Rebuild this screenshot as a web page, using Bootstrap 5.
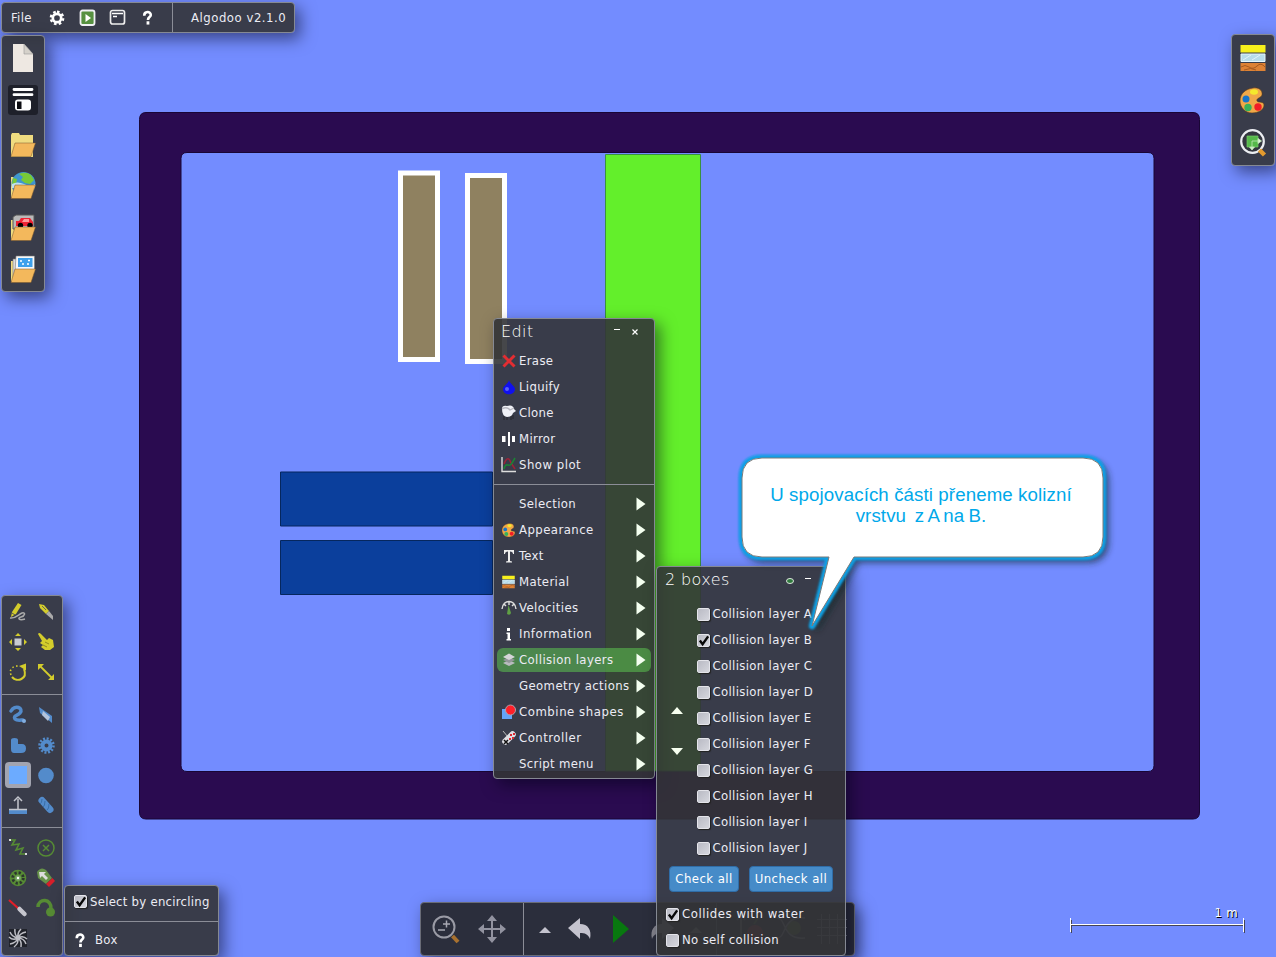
<!DOCTYPE html>
<html lang="en">
<head>
<meta charset="utf-8">
<meta name="viewport" content="width=device-width, initial-scale=1">
<title>Algodoo v2.1.0</title>
<link href="https://cdn.jsdelivr.net/npm/bootstrap@5.3.0/dist/css/bootstrap.min.css" rel="stylesheet">
<style>
body{background:#738cff;font:13px/16px "DejaVu Sans Condensed","DejaVu Sans",sans-serif;font-stretch:condensed;letter-spacing:.34px;color:#ececf4}
svg{display:block;flex:none;overflow:visible}
.desk{width:1276px;height:957px}
.win{position:absolute;background:rgba(51,52,55,.905);border:1px solid #858993;border-radius:4px;box-shadow:5px 6px 16px rgba(0,0,20,.5)}
.win-menu{left:1px;top:2px;width:294px;height:31px}
.win-files{left:1px;top:35px;width:44px;height:257px}
.win-props{left:1231px;top:34px;width:44px;height:132px}
.win-tools{left:1px;top:595px;width:62px;height:361px}
.win-opt{left:64px;top:885px;width:155px;height:71px}
.win-play{left:420px;top:902px;width:435px;height:54px;background:rgba(35,36,39,.9);border-color:#696c77}
.win-edit{left:493px;top:318px;width:162px;height:461px}
.win-boxes{left:656px;top:566px;width:190px;height:390px}
.rule{height:1px;background:#8b8d97;flex:none}
.vrule{width:1px;background:#8b8d97}
.title{font-family:"DejaVu Sans Light","DejaVu Sans Condensed","DejaVu Sans",sans-serif;font-weight:200;font-size:16px;letter-spacing:.4px;height:29px;line-height:25px;color:#fff}
.item{height:26px;padding:0 4px 0 7px;gap:2px}
.item .ico{width:16px;height:16px}
.item.on{margin:1px 3px;padding:0 1px 0 4px;height:24px;background:rgba(90,190,80,.58);border-radius:6px}
.opt{height:26px;gap:3px}
.check{width:13px;height:13px;background:linear-gradient(135deg,#b9bac4,#d5d6dd);border:1px solid #e4e4ea;border-radius:2px;box-shadow:1px 1px 1px #222}
.act{height:26px;background:#468bc8;border:1px solid #2f6da8;border-radius:4px;color:#fff;font-size:13px;line-height:22px;padding:0;letter-spacing:.45px}
.tools{display:grid;grid-template-columns:28px 28px;grid-auto-rows:30px;justify-items:center;align-items:center;padding-left:2px}
.picked{width:26px;height:26px;background:#6cabff;border:4px solid #a2a4b0;border-radius:4px}
.callout{left:730px;top:446px}
.callout-text{left:742px;top:484px;width:358px;color:#00a8ea;font:18.7px/21px "Liberation Sans",Arial,sans-serif;letter-spacing:.1px;white-space:pre-line}
.callout-text span{word-spacing:-1px}
.scale{left:1070px;top:906px;width:174px}
.scale-label{padding-right:6px;line-height:14px;text-shadow:1px 1px #000;color:#fff}
</style>
</head>
<body class="m-0 overflow-hidden">
<svg width="0" height="0" class="position-absolute">
<defs>
<symbol id="palette" viewBox="0 0 26 26"><path d="M13 1C18 0 23 3 22 8c-1 3-6 3-5 6 1 2 7 0 7 4 0 5-6 8-12 8C5 26 0 20 0 14 0 6 6 2 13 1Z" fill="#f0a848" stroke="#5c3a18" stroke-width=".6"/><ellipse cx="14" cy="5" rx="4" ry="2.700" fill="#f5e92c"/><circle cx="6" cy="12" r="3.500" fill="#1674c9"/><circle cx="8" cy="20.500" r="3.700" fill="#37b25a"/><circle cx="18" cy="20" r="3.700" fill="#f21d26"/></symbol>
<symbol id="material" viewBox="0 0 26 26"><path fill="#f7f01c" d="M.5 0h25v7.500H.5z"/><path fill="#b7dcea" stroke="#e6f6fb" d="M1 9h24v7.500H1z"/><path d="M3 15l8-5M12 15l8-5" stroke="#e2f3f9"/><path fill="#dd8235" d="M.5 18h25v8H.5z"/><path d="M1 22q4-3 8 0t8-1 8 1M4 25q7-3 12 0" fill="none" stroke="#a65a20"/></symbol>
<symbol id="help" viewBox="0 0 16 16"><path d="M4.500 5.500c0-5 7-5 7-.8C11.500 7 8.500 7 8.500 10" fill="none" stroke="#fff" stroke-width="2.800"/><path fill="#fff" d="M7 11.500h3V15H7z"/></symbol>
<symbol id="arrow" viewBox="0 0 10 14"><path d="M.5.500l9 6.500-9 6.500z" fill="#f4fff0"/></symbol>
<symbol id="front" viewBox="0 0 26 26"><path d="M5 12h20.500l-4.500 13.500H1z" fill="#f3b85c" stroke="#79572d" stroke-width=".5"/></symbol>
<symbol id="gear" viewBox="0 0 18 18"><path fill="none" stroke="currentColor" stroke-width="2.600" stroke-dasharray="2.900 2.600" d="M9 2a7 7 0 1 1 0 14a7 7 0 1 1 0-14"/><circle cx="9" cy="9" r="4.700" fill="none" stroke="currentColor" stroke-width="3"/></symbol>
<symbol id="tick" viewBox="0 0 13 13"><path d="M2 6l3 4L11 1.500" fill="none" stroke="#080808" stroke-width="2.600"/></symbol>
</defs>
</svg>

<main class="desk position-relative overflow-hidden">
<!-- simulated scene -->
<svg width="1276" height="957">
<path fill-rule="evenodd" d="M146 112.500H1193q6.500 0 6.500 7V812q0 7-6.500 7H146q-6.500 0-6.500-7V119.500q0-7 6.500-7ZM187 152.500q-6 0-6 6V765.500q0 6 6 6H1148q6 0 6-6V158.500q0-6-6-6Z" fill="#2a0b50" stroke="#190635"/>
<path fill="#63ef2b" stroke="#3a9140" d="M605.500 154.500h95V771h-95z"/>
<g fill="#8f8160" stroke="#fff" stroke-width="5"><path d="M400.500 173h37v186.500h-37zM467.500 175.500h37V361.500h-37z"/></g>
<path fill="#0b3f9c" stroke="#06275e" d="M280.500 472h212v54h-212zM280.500 540.500h212v54h-212z"/>
</svg>

<nav class="win win-menu d-flex align-items-center">
<span style="width:38px;margin-left:9px">File</span>
<svg width="16" height="16" color="#fff"><use href="#gear"/></svg>
<svg style="margin-left:15px" width="15" height="16"><rect x=".5" y=".5" width="14" height="14.500" rx="2" fill="#579141" stroke="#f0f0f5" stroke-width="1.800"/><path d="M5.500 4l5.500 4-5.500 4z" fill="#fff"/></svg>
<svg style="margin-left:15px" width="15" height="15"><rect x=".5" y=".5" width="14" height="13.500" rx="2" fill="none" stroke="#eee" stroke-width="1.700"/><path d="M2 3.500h11M3 6.500h4" stroke="#fff" stroke-width="1.500"/></svg>
<svg style="margin-left:15px" width="15" height="16"><use href="#help"/></svg>
<i class="vrule align-self-stretch" style="margin-left:17px"></i>
<span style="margin-left:18px;letter-spacing:.52px">Algodoo v2.1.0</span>
</nav>

<aside class="win win-files">
<div class="d-flex flex-column align-items-center" style="padding-top:1px">
<div class="d-flex align-items-center justify-content-center" style="height:42px"><svg width="20" height="28"><path d="M0 0h11l9 10v18H0z" fill="#eee8e2"/><path d="M11 0v10h9z" fill="#d5d1ca" stroke="#999" stroke-width=".6"/></svg></div>
<div class="d-flex align-items-center justify-content-center" style="height:42px"><svg width="30" height="30"><rect width="30" height="30" rx="3" fill="#1e202a"/><path d="M6 4.500h18M6 9.700h18" stroke="#fff" stroke-width="2.800" stroke-linecap="round"/><rect x="7" y="14.500" width="16" height="11" rx="3" fill="#fff"/><path d="M9 16.500h4.500v7.500H9z" fill="#0c0d12"/></svg></div>
<div class="d-flex align-items-center justify-content-center" style="height:46px"><svg width="26" height="26"><path d="M1 26V4l1-2h7l1 2h13v22z" fill="#f0dc80"/><use href="#front" width="26" height="26"/></svg></div>
<div class="d-flex align-items-center justify-content-center" style="height:38px"><svg width="26" height="28"><path d="M1 5h12v20H1z" fill="#f0dc80"/><circle cx="13.500" cy="12" r="12" fill="#3f95cf"/><path d="M9 2q7-3 12 1l3 5-4 4-5-1-4-3 2-3zM3 6l4 1-1 5-4 1z" fill="#78ca37"/><path d="M2 12q5-3 12 0t11 0v4H2z" fill="#bfe1ef"/><use href="#front" y="1" height="26" width="26"/></svg></div>
<div class="d-flex align-items-center justify-content-center" style="height:46px"><svg width="26" height="27"><path d="M1 5h8v20H1z" fill="#f0dc80"/><path d="M3 2l3-2h18v14H3z" fill="#b9b9b9" stroke="#555"/><path d="M6 9V6h3l2-3h9l3 4v4H6z" fill="#ee2334"/><path d="M14 4h5v3h-7z" fill="#f99"/><circle cx="10.500" cy="10.500" r="2.700"/><circle cx="20" cy="10.500" r="2.700"/><use href="#front" y="0" height="26" width="26"/></svg></div>
<div class="d-flex align-items-center justify-content-center" style="height:38px"><svg width="26" height="28"><path d="M1 5h7v20H1z" fill="#f0dc80"/><path d="M3 3h18v18H3z" fill="#ddd" stroke="#777" stroke-width=".6"/><path d="M6 0h18.500v16H5z" fill="#f8f8f8" stroke="#777" stroke-width=".6"/><path d="M8 2h14.500v9H8z" fill="#3da0ec"/><path d="M10 5h2M18 4.500h2M12 8h2M17 8h2" stroke="#fff" stroke-width="1.700" fill="none"/><use href="#front" y="1" height="26" width="26"/></svg></div>
</div>
</aside>

<aside class="win win-props d-flex flex-column align-items-center" style="gap:16px;padding-top:10px">
<svg width="26" height="26"><use href="#material"/></svg>
<svg width="26" height="26"><use href="#palette"/></svg>
<svg width="26" height="27"><circle cx="12.500" cy="12.500" r="11.300" fill="#33363f" stroke="#eceef2" stroke-width="2.200"/><path d="M7 7h11v11H7z" fill="#55b94a" stroke="#77cb6a" stroke-width=".7"/><path d="M12 12h7M12 12v8M18 9.500l3.500 2.500-3.500 2.500zM9.500 18h5L12 21z" fill="#e4f7df" stroke="#bfe7b6" stroke-width=".8"/><path d="M19.500 21l5 5" stroke="#e39a2e" stroke-width="4.500"/></svg>
</aside>

<aside class="win win-tools d-flex flex-column">
<div class="tools" style="padding-top:1px;height:98px">
<svg width="18" height="18"><path d="M3 9L9 0l3.500 2L7 11l-5 3z" fill="#d3cc2c"/><path d="M1 15c5 1 8-3 12-5 4-1 3 3-1 4s-2 4 4 2" fill="none" stroke="#aaa" stroke-width="1.500"/><path d="M3 10l3 2" stroke="#555"/></svg>
<svg width="18" height="18"><path d="M2 1l5 1 5 6-3 3-6-6z" fill="#d3cc2c"/><path d="M9 11l3-3 4 5v4z" fill="#aaa"/><path d="M5 3l4 4" stroke="#665"/></svg>
<svg width="18" height="18"><path d="M5.500 5.500h7v7h-7z" fill="#c8cad2"/><path d="M6 3l3-3 3 3zM6 15l3 3 3-3zM3 6L0 9l3 3zM15 6l3 3-3 3z" fill="#d3cc2c"/></svg>
<svg width="18" height="18"><path d="M1 1q1-2 3 0l6 6 2-2 4 2 1 7-4 3H8l-4-3 2-2-3-2 2-2z" fill="#d3cc2c"/><path d="M8 9l4 2M6 12l4 2" stroke="#8f8b20"/></svg>
<svg width="18" height="18"><path d="M15 6c4 10-7 14-12 8" fill="none" stroke="#d3cc2c" stroke-width="2"/><path d="M2 12C0 7 3 3 9 3" fill="none" stroke="#d3cc2c" stroke-width="1.600" stroke-dasharray="1.500 2.500"/><path d="M10 3l7-2.500v7z" fill="#d3cc2c"/></svg>
<svg width="18" height="18"><path d="M3 3l12 12" stroke="#d3cc2c" stroke-width="1.800"/><path d="M1 1h6L1 7zM17 17v-6l-6 6z" fill="#d3cc2c"/></svg>
</div>
<i class="rule"></i>
<div class="tools" style="padding-top:5px;height:132px">
<svg width="18" height="18"><path d="M2 5c4-7 13-3 9 2-3 3-7 3-5 6 2 2 6 1 8 1" fill="none" stroke="#538bcb" stroke-width="3.500" stroke-linecap="round"/><circle cx="15" cy="15" r="2" fill="#82aee0"/></svg>
<svg width="18" height="18"><path d="M2 1l13 9v7L3 7z" fill="#538bcb"/><path d="M6 5l7 6-2 4-6-6z" fill="#b2c3dc"/></svg>
<svg width="16" height="17"><path d="M1 3q0-2 3.500-2T8 3v4h4q4 0 4 4.500T11 16H4q-3 0-3-4z" fill="#538bcb"/></svg>
<svg width="17" height="17" color="#538bcb"><circle cx="8.500" cy="8.500" r="4" fill="none" stroke="#538bcb" stroke-width="4"/><circle cx="8.500" cy="8.500" r="7" fill="none" stroke="#538bcb" stroke-width="2.500" stroke-dasharray="2 1.660"/></svg>
<i class="picked"></i>
<svg width="17" height="17"><circle cx="8" cy="8.500" r="7.800" fill="#538bcb"/></svg>
<svg width="18" height="18"><path d="M0 14h18v4H0z" fill="#538bcb"/><path d="M0 13.500h18M9 13V3M5 5l4-4 4 4" fill="none" stroke="#c3c5cd" stroke-width="1.500"/></svg>
<svg width="18" height="18"><path d="M5 4.500l8 9" stroke="#538bcb" stroke-width="7" stroke-linecap="round"/><path d="M3 8q2-1 2-5M6 11q2-1 2-6M10 14q2-1 2-6" fill="none" stroke="#396da7"/></svg>
</div>
<i class="rule"></i>
<div class="tools" style="padding-top:5px">
<svg width="18" height="18"><path d="M1 1h5L3 6l7-1-3 6 7-2-3 6h5" fill="none" stroke="#568b34" stroke-width="1.600"/><path d="M0 0h2v2H0zM16 14h2v2h-2z" fill="#ddd"/></svg>
<svg width="18" height="18"><circle cx="9" cy="9" r="8" fill="none" stroke="#568b34" stroke-width="1.500"/><path d="M6 6l6 6M12 6l-6 6" stroke="#568b34" stroke-width="1.500"/></svg>
<svg width="18" height="18"><circle cx="9" cy="9" r="8.300" fill="#568b34"/><circle cx="9" cy="9" r="5.300" fill="none" stroke="#2c352f" stroke-width="2.800" stroke-dasharray="2.200 1.960"/><circle cx="9" cy="9" r="2.800" fill="#79a468"/><circle cx="9" cy="9" r="1.200" fill="#fff"/></svg>
<svg width="18" height="18"><path d="M0 3q4-6 9-2l6 8-6 6L1 9z" fill="#669249"/><path d="M9 15l6.500-6 2.500 3-6 6z" fill="#d71e29"/><path d="M2 3h7L7 5l4 4-2 2-4-4-2 2z" fill="#ddd"/></svg>
<svg width="18" height="18"><path d="M0 1l10 9" stroke="#e11e28" stroke-width="2.200"/><path d="M10.500 10l5 5" stroke="#c6c6ce" stroke-width="4.500" stroke-linecap="round"/></svg>
<svg width="18" height="18"><path d="M1 8C1-1 15-1 14 10" fill="none" stroke="#568b34" stroke-width="3.500"/><circle cx="13.500" cy="13" r="4.500" fill="#568b34"/></svg>
<svg width="18" height="18"><path d="M0 0h18v18H0z" fill="#20222a"/><g fill="none" stroke="#bcbcc3" stroke-width="1.500"><path d="M9 9q-1-5 3-9M9 9q2-5 8-6M9 9q5-3 9 1M9 9q6 0 8 6M9 9q4 3 3 9M9 9q1 5-4 9M9 9q-2 5-8 6M9 9Q4 12 0 8M9 9Q3 8 1 3M9 9Q5 5 6 0"/></g></svg>
</div>
</aside>

<section class="win win-opt d-flex flex-column">
<div class="d-flex align-items-center" style="height:35px;padding:0 0 4px 9px;gap:3px"><i class="check d-block"><svg width="12" height="12"><use href="#tick"/></svg></i><span class="text-nowrap" style="letter-spacing:.26px">Select by encircling</span></div>
<i class="rule"></i>
<div class="d-flex align-items-center" style="height:33px;padding:3px 0 0 7px;gap:7px"><svg width="16" height="15"><use href="#help"/></svg><span>Box</span></div>
</section>

<nav class="win win-play d-flex align-items-center">
<svg style="margin-left:11px" width="28" height="28"><circle cx="12" cy="12" r="10.500" fill="none" stroke="#9a9ba5" stroke-width="2"/><path d="M11 9h7M14.500 5.500v7M6 15h7" stroke="#a8a9b3" stroke-width="1.500"/><path d="M20.500 21l5.500 6" stroke="#a8712f" stroke-width="4"/></svg>
<svg style="margin-left:18px" width="28" height="28"><path d="M14 3v22M3 14h22" stroke="#9293a0" stroke-width="2"/><path d="M14 0l5 6H9zM14 28l5-6H9zM0 14l6-5v10zM28 14l-6-5v10z" fill="#9293a0"/></svg>
<i class="vrule align-self-stretch" style="margin-left:17px"></i>
<svg style="margin-left:15px" width="12" height="7"><path d="M0 7l6-6 6 6z" fill="#c4c3ce"/></svg>
<svg style="margin-left:17px" width="23" height="22"><path d="M0 10L12 0v6c8 0 12 6 10 15-2-5-5-6-10-6v6z" fill="#c4c3ce"/></svg>
<svg style="margin-left:22px" width="16" height="28"><path d="M0 0l16 14L0 28z" fill="#08780f"/></svg>
<svg style="margin-left:22px" width="23" height="22"><path d="M23 10L11 0v6C3 6-1 12 1 21c2-5 5-6 10-6v6z" fill="#85858e"/></svg>
<svg style="margin-left:16px" width="12" height="7"><path d="M0 7l6-6 6 6z" fill="#777"/></svg>
<i class="vrule align-self-stretch opacity-50" style="margin-left:14px"></i>
<svg style="margin-left:20px" width="30" height="28" opacity=".65"><path d="M4 0v28M0 5l4-5 4 5" stroke="#888" fill="none" stroke-width="2"/><circle cx="18" cy="18" r="8" fill="#b52b35"/><path d="M17 9l4-6" stroke="#587d35" stroke-width="2"/></svg>
<svg style="margin-left:10px" width="28" height="28" opacity=".7"><circle cx="17" cy="13" r="7" fill="#5d762d"/><path d="M0 3c10 0 4 22 28 20M0 23C10 23 4 1 28 3" fill="none" stroke="#999" stroke-width="1.500"/></svg>
<svg style="margin-left:12px" width="30" height="30" opacity=".7"><path d="M0 5.500h30M0 13.500h30M0 21.500h30M4.500 0v30M12.500 0v30M20.500 0v30M28.500 0v30" stroke="#858791" stroke-width="1"/></svg>
</nav>

<section class="win win-edit d-flex flex-column">
<div class="title d-flex"><span style="padding-left:7px;width:119px">Edit</span><svg width="27" height="20"><path d="M1 10.500h6" stroke="#fff"/><path d="M19.500 10.500l5 5M24.500 10.500l-5 5" stroke="#fff" stroke-width="1.200"/></svg></div>
<div class="item d-flex align-items-center"><svg class="ico" viewBox="0 0 16 16"><path d="M2.500 2.500l11 11M13.500 2.500L2.500 13.500" stroke="#e32d32" stroke-width="3"/></svg><span>Erase</span></div>
<div class="item d-flex align-items-center"><svg class="ico" viewBox="0 0 16 16"><path d="M8 1c1 4 6 6 6 9 0 7-12 7-12 0 0-3 5-5 6-9z" fill="#1010ed"/><circle cx="6" cy="10" r="2" fill="#5960f7"/></svg><span>Liquify</span></div>
<div class="item d-flex align-items-center"><svg class="ico" viewBox="0 0 16 16"><path d="M3 11v4M6 11v4M10 11v4M12 10v4" stroke="#25252a"/><path d="M1 4q0-4 5-3 6-2 7 3l2 2-3 2q-1 4-6 4-5-1-5-8z" fill="#eff0f6"/><path d="M1 4q5-3 8 1l4-2" stroke="#b5b5be" stroke-width="1.300" fill="none"/></svg><span>Clone</span></div>
<div class="item d-flex align-items-center"><svg class="ico" viewBox="0 0 16 16"><path d="M1 5h3.500v6H1zM7 1h2v14H7zM11 5h3v6h-3z" fill="#fff"/></svg><span>Mirror</span></div>
<div class="item d-flex align-items-center"><svg class="ico" viewBox="0 0 16 16"><path d="M1 0v14.500h14" fill="none" stroke="#ddd" stroke-width="1.400"/><path d="M3 7q4-10 7-1l4 6" fill="none" stroke="#9b2338" stroke-width="1.600"/><path d="M3 12q1-5 4-4t4-2l3-5" fill="none" stroke="#1b8334" stroke-width="1.600"/></svg><span style="letter-spacing:.5px">Show plot</span></div>
<i class="rule" style="margin:6px 0 6px"></i>
<div class="item d-flex align-items-center"><i class="ico"></i><span>Selection</span><svg class="ms-auto me-1" width="10" height="14"><use href="#arrow"/></svg></div>
<div class="item d-flex align-items-center"><svg class="ico p-0"><use href="#palette" x="1" y="1" width="14" height="14"/></svg><span style="letter-spacing:.45px">Appearance</span><svg class="ms-auto me-1" width="10" height="14"><use href="#arrow"/></svg></div>
<div class="item d-flex align-items-center"><svg class="ico" viewBox="0 0 16 16"><path d="M3 2h10v4h-1q0-2.500-3-2.500V13l2 .5v1H5v-1l2-.5V3.500Q4 3.500 4 6H3z" fill="#eee"/></svg><span>Text</span><svg class="ms-auto me-1" width="10" height="14"><use href="#arrow"/></svg></div>
<div class="item d-flex align-items-center"><svg class="ico"><use href="#material" x="1" y="1.500" width="13" height="13"/></svg><span>Material</span><svg class="ms-auto me-1" width="10" height="14"><use href="#arrow"/></svg></div>
<div class="item d-flex align-items-center"><svg class="ico" viewBox="0 0 16 16"><path d="M1 9C2-1 14-1 15 9M8 1v4M3 4l2 2M13 4l-2 2" fill="none" stroke="#ddd" stroke-width="1.400"/><path d="M7.500 5l2.500 8q-1 3-4 1z" fill="#60a044"/></svg><span style="letter-spacing:.42px">Velocities</span><svg class="ms-auto me-1" width="10" height="14"><use href="#arrow"/></svg></div>
<div class="item d-flex align-items-center"><svg class="ico" viewBox="0 0 16 16"><path d="M6 2h3v3H6zM5.500 6.500H9V13h1v1.500H5.500V13h1V8h-1z" fill="#fff"/></svg><span style="letter-spacing:.5px">Information</span><svg class="ms-auto me-1" width="10" height="14"><use href="#arrow"/></svg></div>
<div class="item on d-flex align-items-center"><svg class="ico" viewBox="0 0 16 16"><path d="M2 11l6-3 6 3-6 3z" fill="#b9bbbf"/><path d="M2 8l6-3 6 3-6 3z" fill="#929799"/><path d="M2 5l6-3.500L14 5 8 8z" fill="#d5d5d8"/></svg><span style="letter-spacing:.4px">Collision layers</span><svg class="ms-auto me-1" width="10" height="14"><use href="#arrow"/></svg></div>
<div class="item d-flex align-items-center"><i class="ico"></i><span class="text-nowrap" style="letter-spacing:.4px">Geometry actions</span><svg class="ms-auto me-1" width="10" height="14"><use href="#arrow"/></svg></div>
<div class="item d-flex align-items-center"><svg class="ico" viewBox="0 0 16 16"><path d="M1 5h10v10H1z" fill="#63a4fa"/><circle cx="9.500" cy="6" r="5" fill="#ff1f29" stroke="#b4a0a8"/></svg><span class="text-nowrap" style="letter-spacing:.55px">Combine shapes</span><svg class="ms-auto me-1" width="10" height="14"><use href="#arrow"/></svg></div>
<div class="item d-flex align-items-center"><svg class="ico" viewBox="0 0 16 16"><path d="M2 1l5 6" stroke="#bbb"/><path d="M4.500 11.500l7-7" stroke="#dedee3" stroke-width="6.500" stroke-linecap="round"/><path d="M3 10l4 4M7 10l-4 4" stroke="#111" stroke-width="1.500"/><path d="M8 8h2v2H8zM12 3h2v2h-2zM9 4h2v2H9zM11 7h2v2h-2z" fill="#d92a32"/></svg><span style="letter-spacing:.5px">Controller</span><svg class="ms-auto me-1" width="10" height="14"><use href="#arrow"/></svg></div>
<div class="item d-flex align-items-center"><i class="ico"></i><span>Script menu</span><svg class="ms-auto me-1" width="10" height="14"><use href="#arrow"/></svg></div>
</section>

<section class="win win-boxes">
<div class="title d-flex" style="height:34px;line-height:26px"><span style="padding-left:8px;width:128px">2 boxes</span><svg width="28" height="20"><ellipse cx="5" cy="14" rx="3.500" ry="2.500" fill="#30793e" stroke="#dfe8df"/><path d="M20 11.500h6" stroke="#fff"/></svg></div>
<div class="d-flex" style="height:260px">
<div class="d-flex flex-column" style="width:39.500px;padding:106px 0 0 14px;gap:34px"><svg width="12" height="7"><path d="M0 7l6-7 6 7z" fill="#f7fff0"/></svg><svg width="12" height="7"><path d="M0 0l6 7 6-7z" fill="#f7fff0"/></svg></div>
<div>
<div class="opt d-flex align-items-center"><i class="check"></i><span>Collision layer A</span></div>
<div class="opt d-flex align-items-center"><i class="check"><svg width="12" height="12"><use href="#tick"/></svg></i><span>Collision layer B</span></div>
<div class="opt d-flex align-items-center"><i class="check"></i><span>Collision layer C</span></div>
<div class="opt d-flex align-items-center"><i class="check"></i><span>Collision layer D</span></div>
<div class="opt d-flex align-items-center"><i class="check"></i><span>Collision layer E</span></div>
<div class="opt d-flex align-items-center"><i class="check"></i><span>Collision layer F</span></div>
<div class="opt d-flex align-items-center"><i class="check"></i><span>Collision layer G</span></div>
<div class="opt d-flex align-items-center"><i class="check"></i><span>Collision layer H</span></div>
<div class="opt d-flex align-items-center"><i class="check"></i><span>Collision layer I</span></div>
<div class="opt d-flex align-items-center"><i class="check"></i><span>Collision layer J</span></div>
</div>
</div>
<div class="d-flex" style="height:40px;padding:5px 0 0 12px;gap:10px"><button class="act" style="width:70px">Check all</button><button class="act" style="width:84px">Uncheck all</button></div>
<div class="opt d-flex align-items-center" style="padding-left:9px"><i class="check"><svg width="12" height="12"><use href="#tick"/></svg></i><span style="letter-spacing:.55px">Collides with water</span></div>
<div class="opt d-flex align-items-center" style="padding-left:9px"><i class="check"></i><span>No self collision</span></div>
</section>

<svg class="callout position-absolute" width="400" height="200">
<defs><filter id="soft" x="-20%" y="-20%" width="140%" height="150%"><feGaussianBlur stdDeviation="3.500"/></filter><filter id="edge" x="-5%" y="-5%" width="110%" height="110%"><feGaussianBlur stdDeviation="1"/></filter>
<path id="bubble" d="M32 12H353q20 0 20 20V91q0 20-20 20H124L82 180L99 111H32q-20 0-20-20V32q0-20 20-20Z"/></defs>
<use href="#bubble" x="4" y="4" fill="#122" stroke="#122" stroke-width="3" opacity=".65" filter="url(#soft)"/>
<use href="#bubble" fill="#10a0e5" stroke="#10a0e5" stroke-width="6.500" stroke-linejoin="round" filter="url(#edge)"/>
<use href="#bubble" fill="#fff" stroke="#7b7b7b" stroke-width="1"/>
</svg>
<p class="callout-text position-absolute text-center m-0">U spojovacích části přeneme kolizní
<span>vrstvu&nbsp; z A na B.</span></p>

<div class="scale position-absolute"><div class="scale-label text-end">1 m</div><svg width="174" height="14"><path d="M1.500 0v13M174.500 0v13M1 5.500h173" stroke="#445" fill="none"/><path d="M.5-2v14M173.500-2v14M0 4.500h173" stroke="#fff" fill="none"/></svg></div>
</main>
<script src="https://cdn.jsdelivr.net/npm/bootstrap@5.3.0/dist/js/bootstrap.bundle.min.js"></script>
</body>
</html>
